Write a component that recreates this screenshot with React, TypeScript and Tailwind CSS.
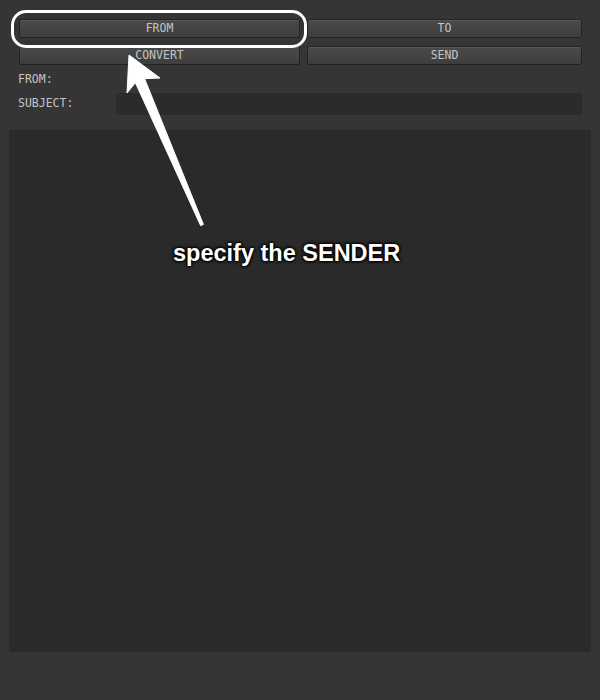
import React from "react";

const btn =
  "h-[19px] flex items-center justify-center rounded-[2px] border border-[#232323] bg-gradient-to-b from-[#4a4a4a] to-[#3e3e3e] text-[#c4c4c4] text-[11.5px] leading-none shadow-[inset_0_1px_0_rgba(255,255,255,0.08)]";

export default function App() {
  return (
    <div
      className="relative w-[600px] h-[700px] bg-[#353535] overflow-hidden"
      style={{ fontFamily: '"DejaVu Sans Mono", "Liberation Mono", monospace' }}
    >
      <div className="flex flex-col pt-[19px]">
        <div className="flex pl-[19px] gap-[7px]">
          <div className={`${btn} w-[281px]`}>FROM</div>
          <div className={`${btn} w-[275px]`}>TO</div>
        </div>
        <div className="flex pl-[19px] gap-[7px] mt-[8px]">
          <div className={`${btn} w-[281px]`}>CONVERT</div>
          <div className={`${btn} w-[275px]`}>SEND</div>
        </div>
        <div className="pl-[18px] mt-[8px] h-[14px] flex items-center text-[11.5px] text-[#c4c4c4] leading-none">
          FROM:
        </div>
        <div className="flex items-center pl-[18px] mt-[6px]">
          <div className="w-[98px] text-[11.5px] text-[#c4c4c4] leading-none">SUBJECT:</div>
          <div className="w-[466px] h-[22px] rounded-[3px] bg-[#2b2b2b]" />
        </div>
        <div className="ml-[9px] mt-[15px] w-[582px] h-[522px] bg-[#2a2a2a]" />
      </div>

      {/* annotation overlay */}
      <div className="absolute left-[11px] top-[10px] w-[296px] h-[38px] rounded-[15px] border-[3px] border-white" />
      <svg className="absolute left-0 top-0" width="600" height="700" viewBox="0 0 600 700">
        <polygon
          points="129,55 160,78 144.6,78.7 203.4,224.4 200.6,225.6 135.4,82.7 127,93"
          fill="#ffffff"
          stroke="#ffffff"
          strokeWidth="1"
          strokeLinejoin="round"
        />
      </svg>
      <div
        className="absolute left-[173px] top-[242px] text-white font-bold text-[23.5px] leading-none [text-shadow:0_0_2px_#000,0_0_2px_#000,0_0_3px_#000,0_0_4px_#000]"
        style={{ fontFamily: '"Liberation Sans", Arial, sans-serif' }}
      >
        specify the SENDER
      </div>
    </div>
  );
}
